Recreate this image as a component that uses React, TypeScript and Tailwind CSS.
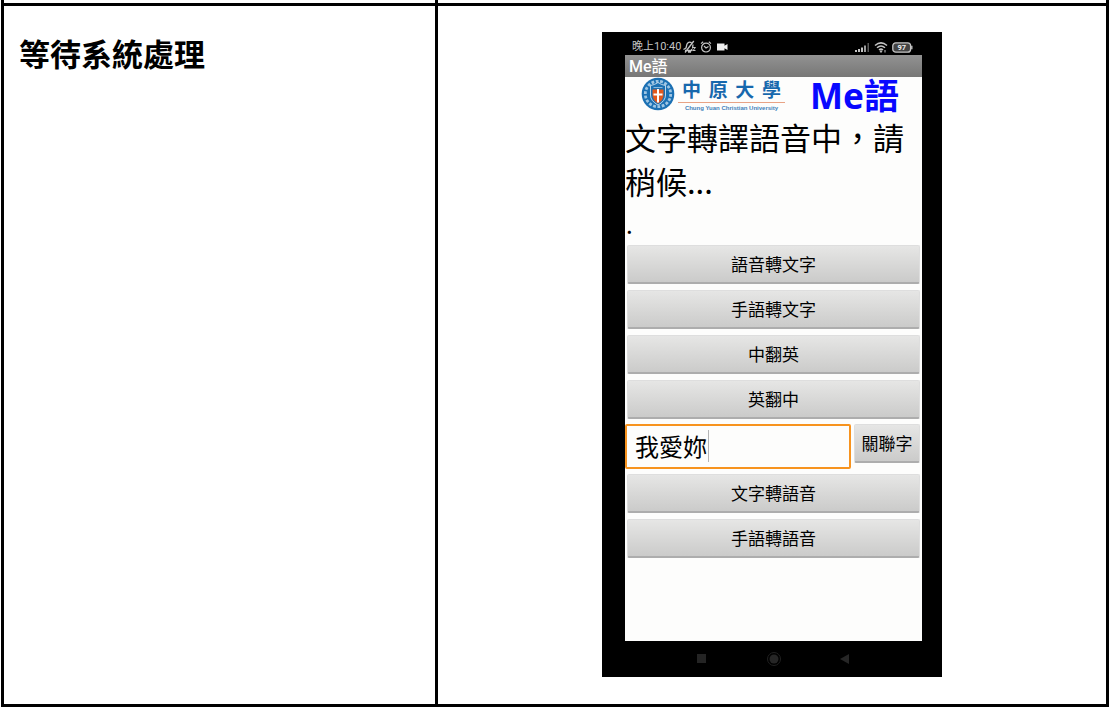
import { useState } from "react";

function ActionButton({ label }: { label: string }) {
  return (
    <button
      type="button"
      className="h-[39px] w-full rounded-[2px] border border-b-2 border-[#dedede] border-b-[#adadad] bg-linear-to-b from-[#e6e6e5] to-[#cbcbca] text-[17px] leading-5 text-black"
    >
      {label}
    </button>
  );
}

function StatusBar() {
  return (
    <div className="flex h-[23px] items-center pt-[7px] pr-[9px] pl-[7px] font-['Roboto','Noto_Sans_CJK_TC',sans-serif] text-[11px] leading-3 text-[#c4c4c4]">
      <span>晚上10:40</span>
      <svg className="ml-[1px]" width="14" height="14" viewBox="0 0 14 14" fill="none" stroke="currentColor" strokeWidth="1.3" strokeLinejoin="round" aria-hidden="true">
        <path d="M1.500 9.500L4 8l1-4C6 2.200 8 1.800 9.500 2.600M3 10.500h7l-.5-1.500M11 4.500l-.5 4M11.800 1L3 12.500M6 12h3" />
        <path d="M11 7.500h2.500L11 10.500h2.500" strokeWidth="1" />
      </svg>
      <svg className="ml-[4px]" width="12" height="12" viewBox="0 0 12 12" fill="none" stroke="currentColor" strokeWidth="1.200" aria-hidden="true">
        <circle cx="6" cy="6.600" r="4.400" />
        <path d="M1 2.600L3.200.8M11 2.600L8.800.8M4 5l2 2 2.500-1.500" />
      </svg>
      <svg className="ml-1" width="12" height="10" viewBox="0 0 12 10" fill="#eee" aria-hidden="true">
        <path d="M1 1.500h7.500v2.300L11.500 2v6L8.500 6.200v2.300H1z" />
      </svg>
      <svg className="ml-auto" width="15" height="10" viewBox="0 0 15 10" fill="currentColor" aria-hidden="true">
        <path d="M0 8h2v2H0zM3 7h2v3H3zM6 5.500h2V10H6z" />
        <path d="M9 3.500h2V10H9z" opacity=".8" />
        <path d="M12.500 1h1.500v9h-1.500z" opacity=".45" />
      </svg>
      <svg className="ml-1" width="14" height="12" viewBox="0 0 14 12" fill="none" stroke="currentColor" strokeWidth="1.500" aria-hidden="true">
        <path d="M1 4.500Q7-.8 13 4.500M3 6.800Q7 3.200 11 6.800M5 9q2-1.800 4 0" />
        <path d="M6 10h2l-1 1.500zM11 9v2.500" strokeWidth="1" />
      </svg>
      <svg className="ml-1" width="21" height="11" viewBox="0 0 21 11" aria-hidden="true">
        <rect x=".8" y=".8" width="17.800" height="9.400" rx="3" fill="#444" stroke="#c4c4c4" strokeWidth="1.300" />
        <path d="M19.800 3.800v3.400" stroke="#c4c4c4" strokeWidth="1.400" />
        <text x="9.700" y="8.200" textAnchor="middle" fontSize="7.500" fontWeight="700" fontFamily="Roboto, sans-serif" fill="#eee">
          97
        </text>
      </svg>
    </div>
  );
}

function UniversitySeal() {
  return (
    <svg width="34" height="34" viewBox="0 0 34 34" aria-hidden="true">
      <circle cx="17" cy="17" r="16.300" fill="#1b70b3" />
      <circle cx="17" cy="17" r="12.700" fill="none" stroke="#9fc6e4" strokeWidth="2.800" strokeDasharray="2.800 1.600" />
      <path d="M9.500 8.500q4-.5 7.500-3 3.500 2.500 7.500 3V18q0 6-7.500 10Q9.500 24 9.500 18z" fill="#1b70b3" stroke="#e6f0f8" strokeWidth=".8" />
      <path d="M11.500 12.500h11V18q0 5-5.500 8.500Q11.500 23 11.500 18z" fill="#e2581d" />
      <path d="M17 12v13.500M12.500 17.500h9" stroke="#fff" strokeWidth="2" />
      <path d="M12.500 10.500h9" stroke="#8bb9dc" strokeWidth="1" />
    </svg>
  );
}

function Header() {
  return (
    <header className="flex h-[38px] items-start pl-4">
      <UniversitySeal />
      <div className="ml-[3px] w-[107px] pt-px">
        <div className="flex justify-between px-1 font-['Noto_Sans_CJK_TC',sans-serif] text-[19px] leading-[22px] font-bold text-[#1768ad]">
          <span>中</span>
          <span>原</span>
          <span>大</span>
          <span>學</span>
        </div>
        <div className="mt-[2px] h-px bg-[#e8a385]" />
        <p className="mt-[2px] text-center font-['Liberation_Sans',sans-serif] text-[6px] leading-[7px] font-bold whitespace-nowrap text-[#3f82bb]">
          Chung Yuan Christian University
        </p>
      </div>
      <h1 className="ml-[25px] font-['Noto_Sans','Noto_Sans_CJK_TC',sans-serif] text-[35px] leading-[37px] font-bold whitespace-nowrap text-[#0808ff]">
        Me語
      </h1>
    </header>
  );
}

function NavigationBar() {
  return (
    <nav className="flex h-9 items-center justify-between px-[71px]" aria-label="系統導覽">
      <button type="button" aria-label="最近使用">
        <svg width="12" height="12" viewBox="0 0 12 12">
          <path d="M1 1h9v9H1z" fill="#242424" />
        </svg>
      </button>
      <button type="button" aria-label="主畫面">
        <svg width="16" height="16" viewBox="0 0 16 16">
          <circle cx="8" cy="8" r="6.500" fill="none" stroke="#202020" />
          <circle cx="8" cy="8" r="4.500" fill="#262626" />
        </svg>
      </button>
      <button type="button" aria-label="返回">
        <svg width="12" height="12" viewBox="0 0 12 12">
          <path d="M10 1v10L1 6z" fill="#262626" />
        </svg>
      </button>
    </nav>
  );
}

function Phone() {
  const [text, setText] = useState("我愛妳");
  return (
    <div className="mx-auto w-[340px] bg-black pr-5 pl-[23px]">
      <StatusBar />
      <div className="bg-[#fdfdfc] font-['Noto_Sans_CJK_TC',sans-serif] text-black">
        <div className="h-[22px] bg-linear-to-b from-[#929292] to-[#777776] pl-1 font-['Roboto','Noto_Sans_CJK_TC',sans-serif] text-base leading-6 font-medium text-white">
          Me語
        </div>
        <Header />
        <p className="text-[31px] leading-[44px]">文字轉譯語音中，請稍候...</p>
        <p className="pl-px text-2xl leading-[42px]">.</p>
        <div className="flex flex-col gap-[5px] px-[2px] pb-[83px]">
          <div className="flex flex-col gap-[6px]">
            <ActionButton label="語音轉文字" />
            <ActionButton label="手語轉文字" />
            <ActionButton label="中翻英" />
            <ActionButton label="英翻中" />
          </div>
          <div className="-ml-[2px] flex items-start gap-[3px]">
            <div className="flex h-[45px] min-w-0 flex-1 items-center rounded-[2px] border-2 border-[#f7931e] bg-[#fdfdfc] pb-[2px] pl-2">
              <input
                aria-label="輸入文字"
                value={text}
                onChange={(event) => setText(event.target.value)}
                className="w-[73px] bg-transparent text-2xl leading-8 outline-none"
              />
              <span className="h-8 w-px bg-[#b5b5b5]" />
            </div>
            <div className="w-[66px]">
              <ActionButton label="關聯字" />
            </div>
          </div>
          <div className="flex flex-col gap-[6px]">
            <ActionButton label="文字轉語音" />
            <ActionButton label="手語轉語音" />
          </div>
        </div>
      </div>
      <NavigationBar />
    </div>
  );
}

export default function App() {
  return (
    <main className="bg-white px-px pb-[2px]">
      <table className="w-full table-fixed border-separate border-spacing-0 border-x-[3px] border-b-[3px] border-black">
        <colgroup>
          <col className="w-[434px]" />
          <col />
        </colgroup>
        <tbody>
          <tr className="h-[3px]">
            <td className="border-r-[3px] border-black p-0" />
            <td className="p-0" />
          </tr>
          <tr className="align-top">
            <th
              scope="row"
              className="border-t-[3px] border-r-[3px] border-black pt-[23px] pl-[15px] text-left font-['Noto_Sans_CJK_TC',sans-serif] text-[31px] leading-[48px] font-bold text-black"
            >
              等待系統處理
            </th>
            <td className="border-t-[3px] border-black pt-[26px] pb-[27px]">
              <Phone />
            </td>
          </tr>
        </tbody>
      </table>
    </main>
  );
}
